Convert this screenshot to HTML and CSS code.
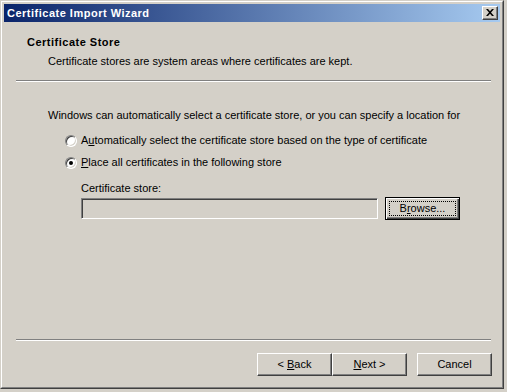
FILE: index.html
```html
<!DOCTYPE html>
<html>
<head>
<meta charset="utf-8">
<link rel="stylesheet" href="styles.css">
</head>
<body>
<div class="frame">
  <div class="frame-inner">
    <div class="titlebar">
      <span class="title">Certificate Import Wizard</span>
      <span class="close"><svg width="8" height="7" viewBox="0 0 8 7"><path d="M0 0h2l2 2.2L6 0h2L5 3.5 8 7H6L4 4.8 2 7H0l3-3.5z" fill="#000"/></svg></span>
    </div>
    <div class="client">
      <div class="header">
        <div class="h-title">Certificate Store</div>
        <div class="h-sub">Certificate stores are system areas where certificates are kept.</div>
      </div>
      <div class="sep sep-top"></div>
      <div class="body">
        <div class="intro">Windows can automatically select a certificate store, or you can specify a location for</div>
        <div class="opt opt1"><span class="radio"></span><span class="lbl">A<u>u</u>tomatically select the certificate store based on the type of certificate</span></div>
        <div class="opt opt2"><span class="radio checked"></span><span class="lbl"><u>P</u>lace all certificates in the following store</span></div>
        <div class="store">
          <div class="store-lbl">Certificate store:</div>
          <div class="store-row">
            <div class="textbox"></div>
            <div class="btn default"><span class="focus"><span>B<u>r</u>owse...</span></span></div>
          </div>
        </div>
      </div>
      <div class="sep sep-bottom"></div>
      <div class="footer">
        <div class="btn"><span>&lt; <u>B</u>ack</span></div>
        <div class="btn"><span><u>N</u>ext &gt;</span></div>
        <div class="btn cancel"><span>Cancel</span></div>
      </div>
    </div>
  </div>
</div>
</body>
</html>
```
FILE: styles.css
```css
html, body {
  margin: 0;
  padding: 0;
  background: #d4d0c8;
}
body {
  font-family: "Liberation Sans", Arial, sans-serif;
  font-size: 11px;
  color: #000;
  width: 507px;
  height: 392px;
  overflow: hidden;
}
.frame {
  width: 504px;
  height: 389px;
  box-sizing: border-box;
  border: 1px solid;
  border-color: #d4d0c8 #404040 #404040 #d4d0c8;
  background: #d4d0c8;
}
.frame-inner {
  height: 100%;
  box-sizing: border-box;
  border: 1px solid;
  border-color: #fff #808080 #808080 #fff;
  padding: 2px;
  display: flex;
  flex-direction: column;
}
.titlebar {
  height: 18px;
  flex: none;
  background: linear-gradient(to right, #0a246a, #a6caf0);
  display: flex;
  align-items: center;
  justify-content: space-between;
  padding: 0 2px 0 3px;
}
.title {
  color: #fff;
  font-weight: bold;
  font-size: 11px;
  line-height: 13px;
  letter-spacing: 0.5px;
}
.close {
  width: 16px;
  height: 14px;
  box-sizing: border-box;
  background: #d4d0c8;
  border: 1px solid;
  border-color: #fff #404040 #404040 #fff;
  box-shadow: inset -1px -1px 0 #808080;
  display: flex;
  align-items: center;
  justify-content: center;
  padding: 0 1px 1px 0;
}
.close svg { display: block; }
.client {
  flex: 1;
  display: flex;
  flex-direction: column;
}
.header {
  padding: 14px 0 0 23px;
  line-height: 13px;
}
.h-title {
  font-weight: bold;
  letter-spacing: 0.5px;
}
.h-sub {
  margin-top: 6px;
  padding-left: 21px;
}
.sep {
  border-top: 1px solid #808080;
  border-bottom: 1px solid #fff;
  height: 0;
  margin: 0 9px 0 12px;
}
.sep-top { margin-top: 12px; }
.body {
  padding-left: 44px;
  line-height: 13px;
}
.intro {
  margin-top: 27px;
  white-space: nowrap;
}
.opt {
  display: flex;
  align-items: center;
  height: 13px;
  padding-left: 17px;
  white-space: nowrap;
}
.opt1 { margin-top: 12px; }
.opt2 { margin-top: 9px; }
.radio {
  width: 12px;
  height: 12px;
  box-sizing: border-box;
  border-radius: 50%;
  border: 1px solid;
  border-color: #808080 #fff #fff #808080;
  background: #fff;
  box-shadow: inset 1px 1px 0 #404040, inset -1px -1px 0 #d4d0c8;
  flex: none;
  display: flex;
  align-items: center;
  justify-content: center;
}
.radio.checked::after {
  content: "";
  width: 4px;
  height: 4px;
  border-radius: 50%;
  background: #000;
}
.lbl { margin-left: 4px; }
.store {
  padding-left: 33px;
  margin-top: 13px;
}
.store-row {
  display: flex;
  align-items: flex-start;
  margin-top: 2px;
}
.textbox {
  width: 297px;
  height: 21px;
  margin-top: 1px;
  box-sizing: border-box;
  border: 1px solid;
  border-color: #808080 #fff #fff #808080;
  box-shadow: inset 1px 1px 0 #404040, inset -1px -1px 0 #d4d0c8;
  background: #d4d0c8;
}
.btn {
  width: 75px;
  height: 23px;
  box-sizing: border-box;
  border: 1px solid;
  border-color: #fff #404040 #404040 #fff;
  box-shadow: inset -1px -1px 0 #808080, inset 1px 1px 0 #d4d0c8;
  background: #d4d0c8;
  display: flex;
  align-items: center;
  justify-content: center;
  line-height: 13px;
  white-space: pre;
}
.btn.default {
  margin-left: 7px;
  border: 1px solid #000;
  box-shadow: inset 1px 1px 0 #fff, inset -1px -1px 0 #404040, inset -2px -2px 0 #808080;
  padding: 3px;
}
.focus {
  flex: 1;
  align-self: stretch;
  border: 1px dotted #000;
  display: flex;
  align-items: center;
  justify-content: center;
}
.sep-bottom { margin-top: auto; }
.footer {
  display: flex;
  justify-content: flex-end;
  padding: 12px 8px 9px 0;
}
.btn.cancel { margin-left: 10px; }
```
